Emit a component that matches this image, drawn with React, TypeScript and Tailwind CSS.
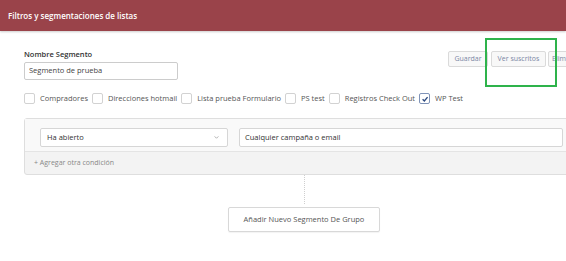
import React from 'react';

const lists = [
  { name: 'Compradores', checked: false },
  { name: 'Direcciones hotmail', checked: false },
  { name: 'Lista prueba Formulario', checked: false },
  { name: 'PS test', checked: false },
  { name: 'Registros Check Out', checked: false },
  { name: 'WP Test', checked: true },
];

function Check({ checked }: { checked: boolean }) {
  return (
    <span
      className={`flex h-[11px] w-[11px] shrink-0 items-center justify-center rounded-[2px] border bg-white ${
        checked ? 'border-[#7f93b8]' : 'border-[#d2d2d2]'
      }`}
    >
      {checked && (
        <svg width="8" height="8" viewBox="0 0 10 10">
          <path d="M2 5.2 L4.2 7.4 L8.2 2.6" fill="none" stroke="#2d4a80" strokeWidth="1.7" />
        </svg>
      )}
    </span>
  );
}

export default function App() {
  return (
    <div
      className="h-[261px] w-[566px] overflow-hidden whitespace-nowrap bg-white text-[#333]"
      style={{ fontFamily: '"Open Sans", sans-serif' }}
    >
      {/* header */}
      <div className="flex h-[31px] items-center bg-[#9a434a] pl-[8px] text-[8px] font-semibold text-white shadow-[0_1px_2px_rgba(0,0,0,0.2)]">
        Filtros y segmentaciones de listas
      </div>

      <div className="pl-[24px]">
        {/* name + actions */}
        <div className="relative flex items-start">
          <div className="pt-[18px]">
            <div className="text-[7.5px] font-semibold leading-[10px] text-[#333]">Nombre Segmento</div>
            <div className="mt-[3px] flex h-[18px] w-[154px] items-center rounded-[2px] border border-[#cccccc] pl-[4px] text-[7.5px] text-[#444]">
              Segmento de prueba
            </div>
          </div>
          <div className="relative ml-auto -mr-[24px] flex gap-[3px] pt-[20px]">
            <button className="h-[16px] w-[40px] rounded-[2px] border border-[#dadada] bg-[#f8f8f8] text-[7px] text-[#7a86a4]">
              Guardar
            </button>
            <button className="h-[16px] w-[55px] rounded-[2px] border border-[#dadada] bg-[#f8f8f8] text-[7px] text-[#7a86a4]">
              Ver suscritos
            </button>
            <button className="-ml-[1px] h-[16px] w-[42px] rounded-[2px] border border-[#dadada] bg-[#f8f8f8] pl-[3px] text-left text-[7px] text-[#7a86a4]">
              Eliminar
            </button>
            <div className="absolute left-[37px] top-[7px] h-[49px] w-[72px] border-2 border-[#2eb34b]" />
          </div>
        </div>

        {/* lists */}
        <div className="mt-[13px] flex items-center text-[7.5px] text-[#555]">
          {lists.map((l) => (
            <label key={l.name} className="mr-[4px] flex items-center gap-[5px]">
              <Check checked={l.checked} />
              <span>{l.name}</span>
            </label>
          ))}
        </div>

        {/* condition panel */}
        <div className="mt-[14px] -mr-[8px] rounded-[3px] border border-[#dedede] bg-[#f3f3f3]">
          <div className="flex gap-[11px] border-b border-[#e4e4e4] bg-[#f9f9f9] pt-[9px] pb-[4px] pl-[15px] pr-[10px]">
            <div className="flex h-[19px] w-[188px] items-center justify-between rounded-[2px] border border-[#d6d6d6] bg-white pl-[6px] pr-[8px] text-[7.5px] text-[#333]">
              <span>Ha abierto</span>
              <svg width="5" height="3" viewBox="0 0 6 4">
                <path d="M0.5 0.5 L3 3 L5.5 0.5" fill="none" stroke="#999" strokeWidth="1" />
              </svg>
            </div>
            <div className="flex h-[19px] flex-1 items-center rounded-[2px] border border-[#d6d6d6] bg-white pl-[5px] text-[7.5px] text-[#333]">
              Cualquier campaña o email
            </div>
          </div>
          <div className="flex h-[22px] items-center pl-[9px] text-[7px] text-[#888]">+ Agregar otra condición</div>
        </div>

        {/* group */}
        <div className="pl-[204px]">
          <div className="ml-[76px] h-[29px] border-l border-dotted border-[#cfcfcf]" />
          <button className="h-[25px] w-[152px] rounded-[2px] border border-[#d8d8d8] bg-white text-[7.5px] text-[#555] shadow-[0_1px_1px_rgba(0,0,0,0.05)]">
            Añadir Nuevo Segmento De Grupo
          </button>
        </div>
      </div>
    </div>
  );
}
